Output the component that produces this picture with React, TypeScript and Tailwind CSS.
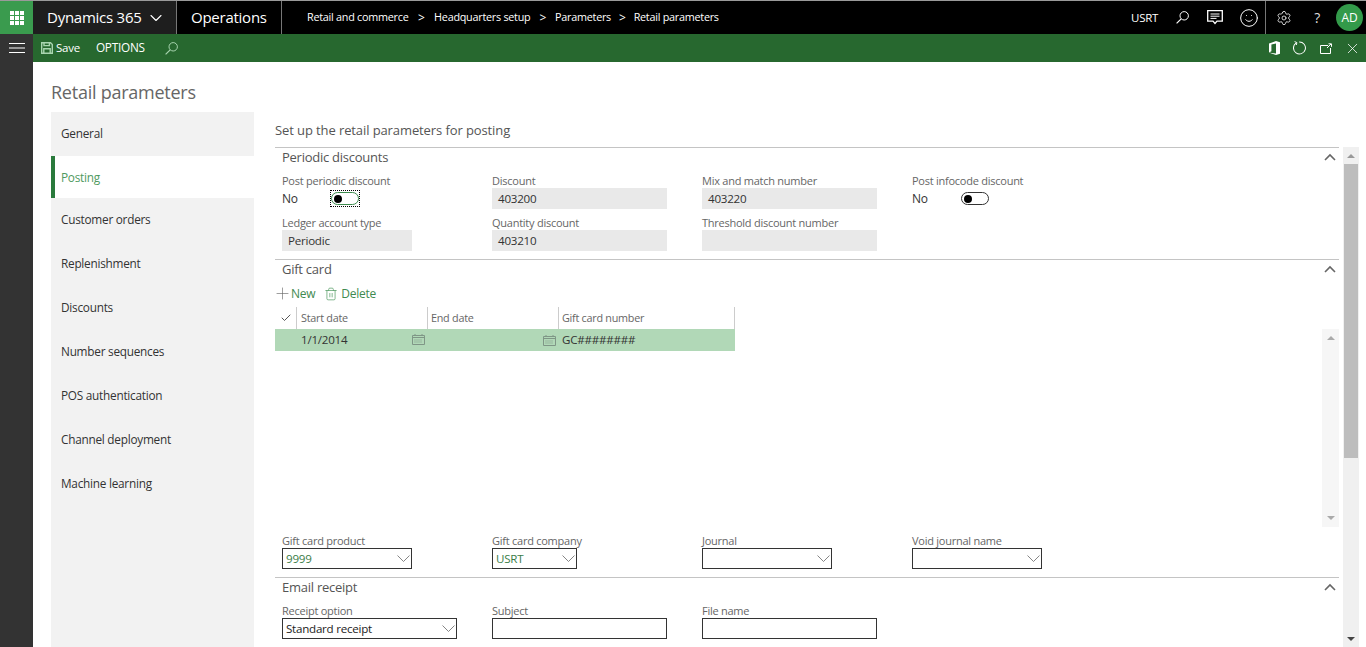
import { Check, ChevronDown, Plus, Settings, Smile, Trash2, X } from 'lucide-react'

const nav = ['General', 'Posting', 'Customer orders', 'Replenishment', 'Discounts', 'Number sequences', 'POS authentication', 'Channel deployment', 'Machine learning']

function Waffle() {
  return (
    <div className="grid grid-cols-3 gap-px">
      {Array.from({ length: 9 }).map((_, i) => (
        <span key={i} className="h-1 w-1 bg-white" />
      ))}
    </div>
  )
}

function Loupe({ color = 'white' }: { color?: string }) {
  return (
    <svg width="13" height="13" viewBox="0 0 13 13" fill="none" stroke={color} strokeWidth="1">
      <circle cx="8.2" cy="4.8" r="4.2" />
      <path d="M5.2 7.8L.6 12.4" strokeWidth="1.2" />
    </svg>
  )
}

function Burger() {
  return (
    <svg width="16" height="10" viewBox="0 0 16 10" stroke="white" strokeWidth="1">
      <path d="M0 .5h16M0 5h16M0 9.5h16" />
    </svg>
  )
}

function SaveIcon() {
  return (
    <svg width="12" height="12" viewBox="0 0 12 12" fill="none" stroke="#a9d5b0" strokeWidth="1.4">
      <path d="M.7.7h8.8l1.8 1.8v8.8H.7z" />
      <path d="M3 1v2.6h5.4V1M2.8 11V6.8h6.4V11" />
    </svg>
  )
}

function ChatIcon() {
  return (
    <svg width="16" height="15" viewBox="0 0 16 15" fill="none" stroke="white" strokeWidth="1.3">
      <path d="M.7.7h14.6v10.4H10l-2 2.4-2-2.4H.7z" />
      <path d="M3.5 4h9M3.5 6.2h9M3.5 8.4h6" strokeWidth="1" />
    </svg>
  )
}

function OfficeIcon() {
  return (
    <svg width="11" height="14" viewBox="0 0 11 14" fill="white">
      <path d="M0 2.6 7 0l4 1.2v11.6L7 14l-7-2.4 7 .9V2.6L2.4 3.6v6.6L0 11.6z" />
    </svg>
  )
}

function RefreshIcon() {
  return (
    <svg width="14" height="14" viewBox="0 0 14 14" fill="none" stroke="white" strokeWidth="1">
      <path d="M3.6 1.6A6 6 0 1 0 7 .9" transform="rotate(-8 7 7)" />
      <path d="M1.6 .6l2.3 1 -.6 2.4" />
    </svg>
  )
}

function PopIcon() {
  return (
    <svg width="13" height="11" viewBox="0 0 13 11" fill="none" stroke="white" strokeWidth="1">
      <path d="M8 2.5H.5v8h10V5" />
      <path d="M7 5l4-4M8.5.8h3v3" />
    </svg>
  )
}

function CalendarIcon() {
  return (
    <svg width="13" height="11" viewBox="0 0 13 11" fill="none" stroke="#7f9686" strokeWidth="1">
      <path d="M.5 1.5h12v9H.5zM.5 3.5h12" />
      <path d="M2.5 6h8M2.5 8h8" strokeDasharray="1 1" />
      <path d="M3 0v1.5M10 0v1.5" />
    </svg>
  )
}

function SelectChevron() {
  return (
    <svg width="13" height="7" viewBox="0 0 13 7" fill="none" stroke="#777" strokeWidth="0.9">
      <path d="M.5.5l6 6 6-6" />
    </svg>
  )
}

function Label({ children }: { children: string }) {
  return <span className="h-[20px] pt-[4px] text-[11px] leading-[17px] text-[#666]">{children}</span>
}

function Field({ label, value, w, kind = 'read', green }: { label: string; value?: string; w: string; kind?: 'read' | 'select' | 'input'; green?: boolean }) {
  return (
    <div className="flex h-[42px] w-[210px] flex-col">
      <Label>{label}</Label>
      {kind === 'read' ? (
        <div className={`flex h-[21px] items-center bg-[#e9e9e9] px-[6px] text-[11.6px] text-[#333] ${w}`}>{value}</div>
      ) : (
        <div className={`flex h-[21px] items-center justify-between border border-[#333] pl-[3px] pr-[1px] text-[11.6px] ${green ? 'text-[#3b7d48]' : 'text-[#222]'} ${w}`}>
          <span>{value}</span>
          {kind === 'select' && <SelectChevron />}
        </div>
      )}
    </div>
  )
}

function Toggle({ label, focus }: { label: string; focus?: boolean }) {
  return (
    <div className="flex h-[42px] w-[210px] flex-col">
      <Label>{label}</Label>
      <div className="flex h-[21px] items-center text-[12px] text-[#333]">
        <span className="w-[48px]">No</span>
        <div className={`flex h-[17px] w-[30px] items-center justify-center ${focus ? 'border border-dotted border-black' : ''}`}>
          <div className={`flex h-[13px] w-[28px] shrink-0 items-center rounded-full border pl-[2px] ${focus ? 'border-[#3b8a4c]' : 'border-[#333]'}`}>
            <span className="h-[8px] w-[8px] rounded-full bg-black" />
          </div>
        </div>
      </div>
    </div>
  )
}

function Section({ title, children }: { title: string; children: React.ReactNode }) {
  return (
    <section className="border-t border-[#c4c4c4]">
      <div className="flex h-[20px] items-center justify-between pl-[7px] pr-[3px]">
        <span className="text-[13px] text-[#555]">{title}</span>
        <svg width="12" height="8" viewBox="0 0 12 8" fill="none" stroke="#666" strokeWidth="1.6" className="mb-[2px]">
          <path d="M1 7l5-5 5 5" />
        </svg>
      </div>
      {children}
    </section>
  )
}

export default function App() {
  return (
    <div className="flex h-[647px] w-[1366px] flex-col overflow-hidden bg-white font-['Open_Sans','Noto_Sans',sans-serif] tracking-[-0.25px]">
      <header className="flex h-[34px] shrink-0 items-stretch border-t border-[#9a9a9a] bg-black text-white">
        <div className="flex w-[33px] items-center justify-center bg-[#3a9b4e]">
          <Waffle />
        </div>
        <div className="flex w-[144px] items-center gap-[4px] border-r border-[#777] bg-[#1e1e1e] pl-[14px] text-[15px]">
          Dynamics 365
          <ChevronDown size={20} strokeWidth={1.3} />
        </div>
        <div className="flex w-[105px] items-center border-r border-[#777] pl-[14px] text-[15px]">Operations</div>
        <div className="flex items-center pl-[25px] text-[10.8px]">
          <span>Retail and commerce</span>
          <span className="mx-[9.5px] text-[12px]">&gt;</span>
          <span>Headquarters setup</span>
          <span className="mx-[9px] text-[12px]">&gt;</span>
          <span>Parameters</span>
          <span className="mx-[8px] text-[12px]">&gt;</span>
          <span>Retail parameters</span>
        </div>
        <div className="ml-auto flex items-center">
          <span className="mr-[18px] text-[11.5px]">USRT</span>
          <Loupe />
          <span className="ml-[18px]"><ChatIcon /></span>
          <Smile size={20} strokeWidth={1.2} className="ml-[16px] mr-[6px]" />
          <div className="flex h-full items-center border-l border-[#777] pl-[10px]">
            <Settings size={16} strokeWidth={1.2} className="mr-[22px]" />
            <span className="mr-[16px] text-[14px] text-[#ddd]">?</span>
            <span className="mr-[3px] flex h-[27px] w-[27px] items-center justify-center rounded-full bg-[#339a4a] text-[12px] font-medium">AD</span>
          </div>
        </div>
      </header>

      <div className="flex min-h-0 flex-1">
        <aside className="flex w-[33px] shrink-0 justify-center bg-[#333] pt-[9px]">
          <Burger />
        </aside>
        <div className="flex min-w-0 flex-1 flex-col">
          <div className="flex h-[28px] shrink-0 items-center bg-[#27682f] pl-[8px] pr-[5px] text-white">
            <SaveIcon />
            <span className="ml-[3px] text-[11.5px]">Save</span>
            <span className="ml-[16px] text-[11.8px]">OPTIONS</span>
            <span className="ml-[20px]"><Loupe color="#a9d5b0" /></span>
            <div className="ml-auto flex items-center">
              <OfficeIcon />
              <span className="ml-[13px]"><RefreshIcon /></span>
              <span className="ml-[13px]"><PopIcon /></span>
              <X size={17} strokeWidth={1.1} className="ml-[11px]" />
            </div>
          </div>

          <div className="flex min-h-0 flex-1 flex-col pl-[18px]">
            <h1 className="flex h-[50px] shrink-0 items-end pb-[6px] text-[18px] font-normal text-[#666]">Retail parameters</h1>
            <div className="flex min-h-0 flex-1">
              <nav className="w-[203px] shrink-0 bg-[#f2f2f2]">
                {nav.map((n) =>
                  n === 'Posting' ? (
                    <div key={n} className="flex h-[42px] items-center border-l-4 border-[#2a7a3c] bg-white pl-[6px] pt-[1px] text-[11.8px] text-[#4f9a60]">
                      {n}
                    </div>
                  ) : (
                    <div key={n} className="flex h-[44px] items-center pl-[10px] text-[11.8px] text-[#333]">
                      {n}
                    </div>
                  ),
                )}
              </nav>

              <div className="flex min-w-0 flex-1 flex-col pl-[21px]">
                <div className="flex h-[35px] shrink-0 items-center pt-[2px] text-[13px] tracking-[-0.1px] text-[#555]">Set up the retail parameters for posting</div>
                <div className="flex min-h-0 flex-1">
                  <div className="w-[1064px] shrink-0">
                    <Section title="Periodic discounts">
                      <div className="flex pl-[7px]">
                        <Toggle label="Post periodic discount" focus />
                        <Field label="Discount" value="403200" w="w-[175px]" />
                        <Field label="Mix and match number" value="403220" w="w-[175px]" />
                        <Toggle label="Post infocode discount" />
                      </div>
                      <div className="flex h-[49px] pl-[7px]">
                        <Field label="Ledger account type" value="Periodic" w="w-[130px]" />
                        <Field label="Quantity discount" value="403210" w="w-[175px]" />
                        <Field label="Threshold discount number" w="w-[175px]" />
                      </div>
                    </Section>

                    <Section title="Gift card">
                      <div className="flex h-[27px] items-center text-[12px] text-[#3f8a50]">
                        <Plus size={19} strokeWidth={0.8} className="-ml-[2px] text-[#666]" />
                        <span className="ml-[-1px]">New</span>
                        <Trash2 size={14} strokeWidth={1.2} className="ml-[9px] text-[#4f9a60]" />
                        <span className="ml-[3px]">Delete</span>
                      </div>
                      <div className="flex h-[221px]">
                        <div className="w-[460px] shrink-0">
                          <div className="flex h-[22px] items-stretch text-[10.8px] text-[#666]">
                            <div className="flex w-[22px] items-center justify-center border-r border-[#ccc] text-[#555]">
                              <Check size={12} strokeWidth={2} />
                            </div>
                            <div className="flex w-[131px] items-center border-r border-[#ccc] pl-[4px]">Start date</div>
                            <div className="flex w-[131px] items-center border-r border-[#ccc] pl-[3px]">End date</div>
                            <div className="flex w-[176px] items-center border-r border-[#ccc] pl-[3px]">Gift card number</div>
                          </div>
                          <div className="flex h-[22px] items-center bg-[#b1d8b7] text-[11.6px] text-[#333]">
                            <div className="flex w-[152px] items-center justify-between pl-[26px] pr-[2px]">
                              1/1/2014
                              <CalendarIcon />
                            </div>
                            <div className="flex w-[131px] justify-end pr-[2px]">
                              <CalendarIcon />
                            </div>
                            <div className="pl-[4px]">GC########</div>
                          </div>
                        </div>
                        <div className="ml-auto mt-[22px] flex h-[198px] w-[17px] flex-col items-center justify-between bg-[#f6f6f6] py-[7px]">
                          <span className="h-0 w-0 border-x-[4px] border-b-[4px] border-x-transparent border-b-[#aaa]" />
                          <span className="h-0 w-0 border-x-[4px] border-t-[4px] border-x-transparent border-t-[#aaa]" />
                        </div>
                      </div>
                      <div className="flex h-[49px] pl-[7px]">
                        <Field label="Gift card product" value="9999" w="w-[130px]" kind="select" green />
                        <Field label="Gift card company" value="USRT" w="w-[85px]" kind="select" green />
                        <Field label="Journal" w="w-[130px]" kind="select" />
                        <Field label="Void journal name" w="w-[130px]" kind="select" />
                      </div>
                    </Section>

                    <Section title="Email receipt">
                      <div className="flex pl-[7px]">
                        <Field label="Receipt option" value="Standard receipt" w="w-[175px]" kind="select" />
                        <Field label="Subject" w="w-[175px]" kind="input" />
                        <Field label="File name" w="w-[175px]" kind="input" />
                      </div>
                    </Section>
                  </div>

                  <div className="ml-[4px] flex w-[16px] shrink-0 flex-col items-center bg-[#f0f0f0]">
                    <div className="flex h-[17px] items-center">
                      <span className="h-0 w-0 border-x-[4px] border-b-[4px] border-x-transparent border-b-[#999]" />
                    </div>
                    <div className="h-[294px] w-[14px] bg-[#bdbdbd]" />
                    <div className="mt-auto flex h-[17px] items-center">
                      <span className="h-0 w-0 border-x-[4px] border-t-[4px] border-x-transparent border-t-[#444]" />
                    </div>
                  </div>
                </div>
              </div>
            </div>
          </div>
        </div>
      </div>
    </div>
  )
}
